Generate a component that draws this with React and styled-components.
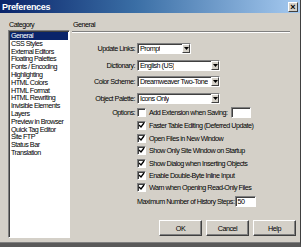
import React from 'react';
import styled, { createGlobalStyle } from 'styled-components';

const GlobalStyle = createGlobalStyle`
  html, body {
    margin: 0;
    padding: 0;
    background: #d4d0c8;
  }
  body {
    font-family: "Liberation Sans", Arial, sans-serif;
    font-size: 7.2px;
    letter-spacing: -0.5px;
    color: #000;
  }
`;

const categories = [
  'General',
  'CSS Styles',
  'External Editors',
  'Floating Palettes',
  'Fonts / Encoding',
  'Highlighting',
  'HTML Colors',
  'HTML Format',
  'HTML Rewriting',
  'Invisible Elements',
  'Layers',
  'Preview in Browser',
  'Quick Tag Editor',
  'Site FTP',
  'Status Bar',
  'Translation'
];

const selects = [
  { label: 'Update Links:', value: 'Prompt', width: 54 },
  { label: 'Dictionary:', value: 'English (US)', width: 83 },
  { label: 'Color Scheme:', value: 'Dreamweaver Two-Tone', width: 83 },
  { label: 'Object Palette:', value: 'Icons Only', width: 83 }
];

const options = [
  { label: 'Faster Table Editing (Deferred Update)', checked: true },
  { label: 'Open Files in New Window', checked: true },
  { label: 'Show Only Site Window on Startup', checked: true },
  { label: 'Show Dialog when Inserting Objects', checked: true },
  { label: 'Enable Double-Byte Inline Input', checked: true },
  { label: 'Warn when Opening Read-Only Files', checked: true }
];

const Check = ({ checked }) => (
  <CheckBox>
    {checked && (
      <svg width="7" height="7" viewBox="0 0 7 7">
        <path d="M1 3 L3 5 L6 1" stroke="#000" strokeWidth="1.3" fill="none" />
      </svg>
    )}
  </CheckBox>
);

const Select = ({ value, width }) => (
  <SelectBox $width={width}>
    <span>{value}</span>
    <ArrowButton>
      <svg width="5" height="3" viewBox="0 0 5 3">
        <path d="M0 0 H5 L2.5 3 Z" fill="#000" />
      </svg>
    </ArrowButton>
  </SelectBox>
);

const App = () => {
  return (
    <>
      <GlobalStyle />
      <Window>
        <TitleBar>
          <span>Preferences</span>
          <CloseButton>×</CloseButton>
        </TitleBar>
        <Main>
          <LeftCol>
            <GroupLabel>Category</GroupLabel>
            <List>
              {categories.map((c, i) => (
                <ListItem key={c} $selected={i === 0}>
                  {c}
                </ListItem>
              ))}
            </List>
          </LeftCol>
          <RightCol>
            <GroupLabel>General</GroupLabel>
            <Divider />
            <SelectGroup>
              {selects.map((s) => (
                <FormRow key={s.label}>
                  <Label>{s.label}</Label>
                  <Select value={s.value} width={s.width} />
                </FormRow>
              ))}
            </SelectGroup>
            <OptionsRow>
              <Label>Options:</Label>
              <CheckLine>
                <Check checked={false} />
                <span>Add Extension when Saving:</span>
                <TextBox $width={20} />
              </CheckLine>
            </OptionsRow>
            <CheckList>
              {options.map((o) => (
                <CheckLine key={o.label}>
                  <Check checked={o.checked} />
                  <span>{o.label}</span>
                </CheckLine>
              ))}
              <HistoryLine>
                <span>Maximum Number of History Steps:</span>
                <TextBox $width={21}>50</TextBox>
              </HistoryLine>
            </CheckList>
            <ButtonRow>
              <Button>OK</Button>
              <Button>Cancel</Button>
              <Button>Help</Button>
            </ButtonRow>
          </RightCol>
        </Main>
      </Window>
    </>
  );
};

const Window = styled.div`
  width: 301px;
  height: 247px;
  box-sizing: border-box;
  background: #d4d0c8;
  display: flex;
  flex-direction: column;
  border-right: 1px solid #404040;
  border-bottom: 4px solid #5a5a5a;
  box-shadow: inset 0 -1px #808080;
  overflow: hidden;
`;

const TitleBar = styled.div`
  height: 13px;
  flex: none;
  display: flex;
  align-items: center;
  justify-content: space-between;
  padding: 0 2px 0 2px;
  background: linear-gradient(to right, #0a246a 0%, #3a6ea5 45%, #a6caf0 100%);
  color: #fff;
  font-weight: bold;
  font-size: 9px;
  letter-spacing: -0.3px;
`;

const CloseButton = styled.div`
  width: 8px;
  height: 8px;
  background: #d4d0c8;
  border: 1px solid;
  border-color: #fff #404040 #404040 #fff;
  color: #000;
  font-size: 9px;
  line-height: 8px;
  text-align: center;
  letter-spacing: 0;
`;

const Main = styled.div`
  flex: 1;
  display: flex;
  padding: 7px 4px 5px 8px;
  min-height: 0;
`;

const LeftCol = styled.div`
  width: 62px;
  display: flex;
  flex-direction: column;
`;

const GroupLabel = styled.div`
  height: 10px;
  line-height: 10px;
  padding-left: 1px;
`;

const List = styled.div`
  flex: 1;
  background: #fff;
  border: 1px solid;
  border-color: #808080 #fff #fff #808080;
  box-shadow: inset 1px 1px #404040;
  padding: 1px 1px 0 1px;
  overflow: hidden;
`;

const ListItem = styled.div`
  height: 7.8px;
  line-height: 7.8px;
  padding-left: 1px;
  white-space: nowrap;
  background: ${(p) => (p.$selected ? '#0a246a' : 'transparent')};
  color: ${(p) => (p.$selected ? '#fff' : '#000')};
`;

const RightCol = styled.div`
  flex: 1;
  margin-left: 2px;
  display: flex;
  flex-direction: column;
`;

const Divider = styled.div`
  height: 0;
  margin: 1px 6px 0 0;
  border-top: 1px solid #808080;
  border-bottom: 1px solid #fff;
`;

const SelectGroup = styled.div`
  display: flex;
  flex-direction: column;
  padding-top: 10px;
  gap: 5.5px;
`;

const FormRow = styled.div`
  display: grid;
  grid-template-columns: 63px auto;
  column-gap: 2px;
  align-items: center;
  height: 11px;
`;

const OptionsRow = styled(FormRow)`
  margin-top: 2.5px;
  height: 12px;
`;

const Label = styled.div`
  text-align: right;
  white-space: nowrap;
`;

const SelectBox = styled.div`
  width: ${(p) => p.$width}px;
  height: 11px;
  box-sizing: border-box;
  background: #fff;
  border: 1px solid;
  border-color: #808080 #fff #fff #808080;
  box-shadow: inset 1px 1px #404040;
  display: flex;
  align-items: center;
  justify-content: space-between;
  padding-left: 2px;
  white-space: nowrap;
  span {
    overflow: hidden;
  }
`;

const ArrowButton = styled.div`
  width: 8px;
  height: 9px;
  box-sizing: border-box;
  flex: none;
  background: #d4d0c8;
  border: 1px solid;
  border-color: #fff #404040 #404040 #fff;
  display: flex;
  align-items: center;
  justify-content: center;
`;

const CheckBox = styled.div`
  width: 7px;
  height: 7px;
  flex: none;
  background: #fff;
  border: 1px solid;
  border-color: #808080 #fff #fff #808080;
  box-shadow: inset 1px 1px #404040;
  display: flex;
  align-items: center;
  justify-content: center;
`;

const CheckLine = styled.div`
  display: flex;
  align-items: center;
  gap: 3px;
  white-space: nowrap;
`;

const CheckList = styled.div`
  display: flex;
  flex-direction: column;
  padding-left: 65px;
  gap: 3.2px;
  margin-top: 3.4px;
  ${CheckLine} {
    height: 9.2px;
  }
`;

const HistoryLine = styled.div`
  display: flex;
  align-items: center;
  gap: 1px;
  height: 11px;
  white-space: nowrap;
`;

const TextBox = styled.div`
  width: ${(p) => p.$width}px;
  height: 11px;
  box-sizing: border-box;
  background: #fff;
  border: 1px solid;
  border-color: #808080 #fff #fff #808080;
  box-shadow: inset 1px 1px #404040;
  padding-left: 1px;
  line-height: 9px;
`;

const ButtonRow = styled.div`
  margin-top: auto;
  margin-bottom: 2px;
  display: flex;
  justify-content: flex-end;
  gap: 4px;
`;

const Button = styled.div`
  width: 43px;
  height: 16px;
  box-sizing: border-box;
  background: #d4d0c8;
  border: 1px solid;
  border-color: #fff #404040 #404040 #fff;
  box-shadow: inset -1px -1px #808080;
  display: flex;
  align-items: center;
  justify-content: center;
`;

export default App;
